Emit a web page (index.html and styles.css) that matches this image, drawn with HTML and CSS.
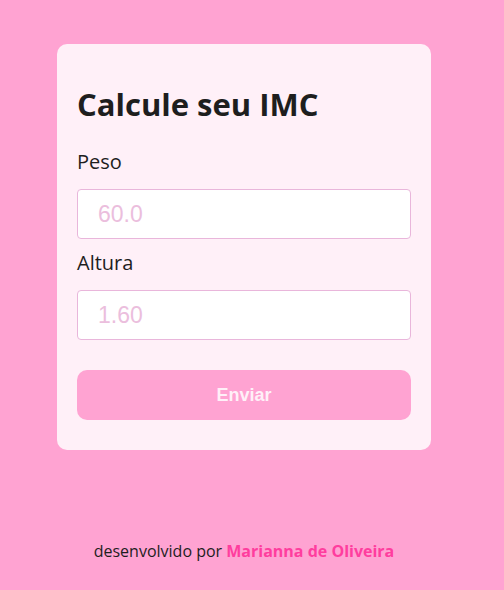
FILE: index.html
```html
<!DOCTYPE html>
<html lang="pt">
<head>
<meta charset="utf-8">
<title>Calcule seu IMC</title>
<link rel="stylesheet" href="styles.css">
</head>
<body>
<div class="page">
  <form class="card">
    <h1 class="title">Calcule seu IMC</h1>
    <label class="label" for="peso">Peso</label>
    <input class="field" id="peso" type="text" placeholder="60.0">
    <label class="label" for="altura">Altura</label>
    <input class="field" id="altura" type="text" placeholder="1.60">
    <button class="submit" type="button">Enviar</button>
  </form>
  <footer class="footer">desenvolvido por <strong class="author">Marianna de Oliveira</strong></footer>
</div>
</body>
</html>
```

FILE: styles.css
```css
html, body {
  margin: 0;
  padding: 0;
  background: #ffa3d2;
}
body {
  font-family: "Open Sans", sans-serif;
  color: #1e1e1e;
}
.page {
  width: 488px;
  padding-top: 44px;
  display: flex;
  flex-direction: column;
  align-items: center;
}
.card {
  width: 334px;
  padding: 38px 20px 30px;
  background: #fff0f8;
  border-radius: 10px;
  display: flex;
  flex-direction: column;
}
.title {
  margin: 0 0 22px;
  font-size: 31px;
  font-weight: 700;
  line-height: 44px;
  color: #1e1e1e;
}
.label {
  font-size: 20px;
  line-height: 27px;
  margin-bottom: 14px;
  color: #1e1e1e;
}
.field {
  box-sizing: border-box;
  width: 334px;
  height: 50px;
  margin: 0 0 10px;
  padding: 0 20px;
  border: 1px solid #e9b6db;
  border-radius: 4px;
  background: #ffffff;
  font-family: "Liberation Sans", Arial, sans-serif;
  font-size: 23px;
  outline: none;
}
.field::placeholder {
  color: #ebbedd;
}
.submit {
  margin-top: 20px;
  height: 50px;
  border: none;
  border-radius: 10px;
  background: #ffa3d2;
  color: #fff0f8;
  font-family: "Liberation Sans", Arial, sans-serif;
  font-size: 18px;
  font-weight: 700;
}
.footer {
  margin-top: 90px;
  font-size: 16px;
  line-height: 22px;
  color: #1e1e1e;
}
.author {
  color: #ff3d9e;
  font-weight: 700;
}
```
